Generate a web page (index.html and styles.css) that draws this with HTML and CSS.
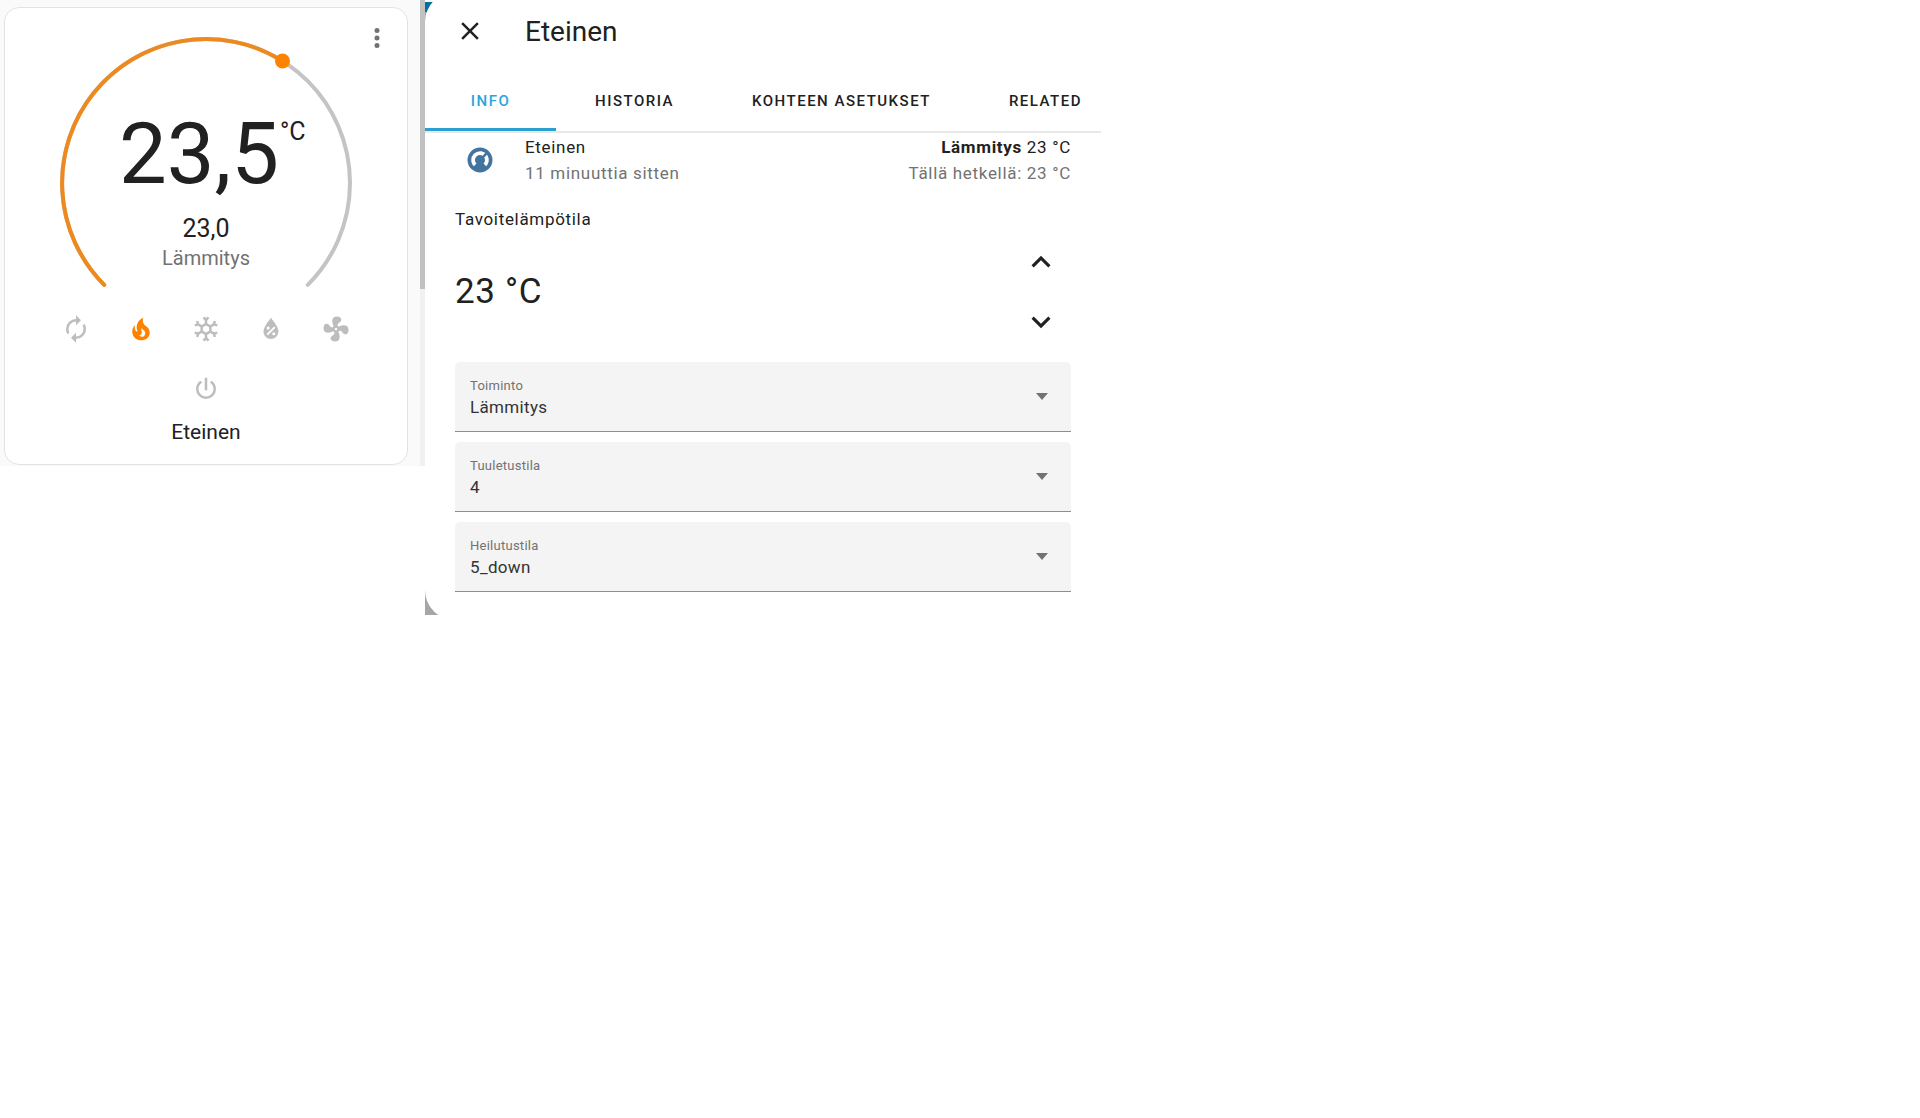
FILE: index.html
```html
<!DOCTYPE html>
<html lang="fi">

<head>
    <meta charset="UTF-8">
    <meta name="viewport" content="width=device-width, initial-scale=1.0">
    <title>Eteinen</title>
    <link rel="stylesheet" href="styles.css">
</head>

<body>
    <main class="screen">
        <!-- Thermostat card -->
        <section class="dashboard">
            <div class="card">
                <button class="icon-btn more" aria-label="Lisää">
                    <svg class="icon" viewBox="0 0 24 24"><path d="M12,16A2,2 0 0,1 14,18A2,2 0 0,1 12,20A2,2 0 0,1 10,18A2,2 0 0,1 12,16M12,10A2,2 0 0,1 14,12A2,2 0 0,1 12,14A2,2 0 0,1 10,12A2,2 0 0,1 12,10M12,4A2,2 0 0,1 14,6A2,2 0 0,1 12,8A2,2 0 0,1 10,6A2,2 0 0,1 12,4Z"/></svg>
                </button>

                <svg class="dial" viewBox="0 0 300 256">
                    <path class="track" d="M48.2,251.8 A144,144 0 1 1 251.8,251.8"/>
                    <path class="value" d="M48.2,251.8 A144,144 0 0 1 226.5,28"/>
                    <circle class="handle" cx="226.5" cy="28" r="7.5"/>
                    <text class="current" x="143" y="150">23,5</text>
                    <text class="unit" x="224" y="107">°C</text>
                    <text class="target" x="150" y="204">23,0</text>
                    <text class="action" x="150" y="232">Lämmitys</text>
                </svg>

                <div class="modes">
                    <button class="icon-btn" aria-label="Automaatti">
                        <svg class="icon" viewBox="0 0 24 24"><path d="M12,6V9L16,5L12,1V4A8,8 0 0,0 4,12C4,13.57 4.46,15.03 5.24,16.26L6.7,14.8C6.25,13.97 6,13 6,12A6,6 0 0,1 12,6M18.76,7.74L17.3,9.2C17.74,10.04 18,11 18,12A6,6 0 0,1 12,18V15L8,19L12,23V20A8,8 0 0,0 20,12C20,10.43 19.54,8.97 18.76,7.74Z"/></svg>
                    </button>
                    <button class="icon-btn selected" aria-label="Lämmitys">
                        <svg class="icon" viewBox="0 0 24 24"><path d="M17.66 11.2C17.43 10.9 17.15 10.64 16.89 10.38C16.22 9.78 15.46 9.35 14.82 8.72C13.33 7.26 13 4.85 13.95 3C13 3.23 12.17 3.75 11.46 4.32C8.87 6.4 7.85 10.07 9.07 13.22C9.11 13.32 9.15 13.42 9.15 13.55C9.15 13.77 9 13.97 8.8 14.05C8.57 14.15 8.33 14.09 8.14 13.93C8.08 13.88 8.04 13.83 8 13.76C6.87 12.33 6.69 10.28 7.45 8.64C5.78 10 4.87 12.3 5 14.47C5.06 14.97 5.12 15.47 5.29 15.97C5.43 16.57 5.7 17.17 6 17.7C7.08 19.43 8.95 20.67 10.96 20.92C13.1 21.19 15.39 20.8 17.03 19.32C18.86 17.66 19.5 15 18.56 12.72L18.43 12.46C18.22 12 17.66 11.2 17.66 11.2M14.5 17.5C14.22 17.74 13.76 18 13.4 18.1C12.28 18.5 11.16 17.94 10.5 17.28C11.69 17 12.4 16.12 12.61 15.23C12.78 14.43 12.46 13.77 12.33 13C12.21 12.26 12.23 11.63 12.5 10.94C12.69 11.32 12.89 11.7 13.13 12C13.9 13 15.11 13.44 15.37 14.8C15.41 14.94 15.43 15.08 15.43 15.23C15.46 16.05 15.1 16.95 14.5 17.5H14.5Z"/></svg>
                    </button>
                    <button class="icon-btn" aria-label="Jäähdytys">
                        <svg class="icon" viewBox="0 0 24 24"><path d="M20.79,13.95L18.46,14.57L16.46,13.44V10.56L18.46,9.43L20.79,10.05L21.31,8.12L19.54,7.65L20,5.88L18.07,5.36L17.45,7.69L15.45,8.82L13,7.38V5.12L14.71,3.41L13.29,2L12,3.29L10.71,2L9.29,3.41L11,5.12V7.38L8.5,8.82L6.5,7.69L5.92,5.36L4,5.88L4.47,7.65L2.7,8.12L3.22,10.05L5.55,9.43L7.55,10.56V13.45L5.55,14.58L3.22,13.96L2.7,15.89L4.47,16.36L4,18.12L5.93,18.64L6.55,16.31L8.55,15.18L11,16.62V18.88L9.29,20.59L10.71,22L12,20.71L13.29,22L14.7,20.59L13,18.88V16.62L15.5,15.17L17.5,16.3L18.12,18.63L20,18.12L19.53,16.35L21.3,15.88L20.79,13.95M9.5,10.56L12,9.11L14.5,10.56V13.44L12,14.89L9.5,13.44V10.56Z"/></svg>
                    </button>
                    <button class="icon-btn" aria-label="Kuivaus">
                        <svg class="icon" viewBox="0 0 24 24"><path d="M12,3.25C12,3.25 6,10 6,14C6,17.32 8.69,20 12,20A6,6 0 0,0 18,14C18,10 12,3.25 12,3.25M14.47,9.97L15.53,11.03L9.53,17.03L8.47,15.97M9.75,10A1.25,1.25 0 0,1 11,11.25A1.25,1.25 0 0,1 9.75,12.5A1.25,1.25 0 0,1 8.5,11.25A1.25,1.25 0 0,1 9.75,10M14.25,14.5A1.25,1.25 0 0,1 15.5,15.75A1.25,1.25 0 0,1 14.25,17A1.25,1.25 0 0,1 13,15.75A1.25,1.25 0 0,1 14.25,14.5Z"/></svg>
                    </button>
                    <button class="icon-btn" aria-label="Tuuletus">
                        <svg class="icon" viewBox="0 0 24 24"><path d="M12,11A1,1 0 0,0 11,12A1,1 0 0,0 12,13A1,1 0 0,0 13,12A1,1 0 0,0 12,11M12.5,2C17,2 17.11,5.57 14.75,6.75C13.76,7.24 13.32,8.29 13.13,9.22C13.61,9.42 14.03,9.73 14.35,10.13C18.05,8.13 22.03,8.92 22.03,12.5C22.03,17 18.46,17.1 17.28,14.73C16.78,13.74 15.72,13.3 14.79,13.11C14.59,13.59 14.28,14 13.88,14.34C15.87,18.03 15.08,22 11.5,22C7,22 6.91,18.42 9.27,17.24C10.25,16.75 10.69,15.71 10.89,14.79C10.4,14.59 9.97,14.27 9.65,13.87C5.96,15.85 2,15.07 2,11.5C2,7 5.56,6.89 6.74,9.26C7.24,10.25 8.29,10.68 9.22,10.87C9.41,10.39 9.73,9.97 10.14,9.65C8.15,5.96 8.94,2 12.5,2Z"/></svg>
                    </button>
                    <button class="icon-btn" aria-label="Pois">
                        <svg class="icon" viewBox="0 0 24 24"><path d="M16.56,5.44L15.11,6.89C16.84,7.94 18,9.83 18,12A6,6 0 0,1 12,18A6,6 0 0,1 6,12C6,9.83 7.16,7.94 8.88,6.88L7.44,5.44C5.36,6.88 4,9.28 4,12A8,8 0 0,0 12,20A8,8 0 0,0 20,12C20,9.28 18.64,6.88 16.56,5.44M13,3H11V13H13"/></svg>
                    </button>
                </div>
                <p class="name">Eteinen</p>
            </div>
            <div class="scrollbar"><div class="thumb"></div></div>
        </section>

        <!-- More info dialog -->
        <section class="backdrop">
            <div class="dialog">
                <header class="title-bar">
                    <button class="icon-btn" aria-label="Sulje">
                        <svg class="icon" viewBox="0 0 24 24"><path d="M19,6.41L17.59,5L12,10.59L6.41,5L5,6.41L10.59,12L5,17.59L6.41,19L12,13.41L17.59,19L19,17.59L13.41,12L19,6.41Z"/></svg>
                    </button>
                    <h1>Eteinen</h1>
                </header>

                <nav class="tabs">
                    <button class="tab active">INFO</button>
                    <button class="tab">HISTORIA</button>
                    <button class="tab">KOHTEEN ASETUKSET</button>
                    <button class="tab">RELATED</button>
                </nav>

                <div class="content">
                    <div class="state">
                        <svg class="icon" viewBox="0 0 24 24"><path d="M16.95,16.95L14.83,14.83C15.55,14.1 16,13.1 16,12C16,11.26 15.79,10.57 15.43,10L17.6,7.81C18.5,9 19,10.43 19,12C19,13.93 18.22,15.68 16.95,16.95M12,5C13.57,5 15,5.5 16.19,6.4L14,8.56C13.43,8.21 12.74,8 12,8A4,4 0 0,0 8,12C8,13.1 8.45,14.1 9.17,14.83L7.05,16.95C5.78,15.68 5,13.93 5,12A7,7 0 0,1 12,5M12,2A10,10 0 0,0 2,12A10,10 0 0,0 12,22A10,10 0 0,0 22,12A10,10 0 0,0 12,2Z"/></svg>
                        <div class="info">
                            <p>Eteinen</p>
                            <p class="secondary">11 minuuttia sitten</p>
                        </div>
                        <div class="reading">
                            <p><b>Lämmitys</b> 23 °C</p>
                            <p class="secondary">Tällä hetkellä: 23 °C</p>
                        </div>
                    </div>

                    <p class="section-label">Tavoitelämpötila</p>
                    <div class="target-control">
                        <span class="temperature">23 °C</span>
                        <div class="steps">
                            <button class="icon-btn" aria-label="Nosta">
                                <svg class="icon" viewBox="0 0 24 24"><path d="M7.41,15.41L12,10.83L16.59,15.41L18,14L12,8L6,14L7.41,15.41Z"/></svg>
                            </button>
                            <button class="icon-btn" aria-label="Laske">
                                <svg class="icon" viewBox="0 0 24 24"><path d="M7.41,8.58L12,13.17L16.59,8.58L18,10L12,16L6,10L7.41,8.58Z"/></svg>
                            </button>
                        </div>
                    </div>

                    <div class="field">
                        <label for="operation">Toiminto</label>
                        <select id="operation">
                            <option>Lämmitys</option>
                        </select>
                    </div>
                    <div class="field">
                        <label for="fan-mode">Tuuletustila</label>
                        <select id="fan-mode">
                            <option>4</option>
                        </select>
                    </div>
                    <div class="field">
                        <label for="swing-mode">Heilutustila</label>
                        <select id="swing-mode">
                            <option>5_down</option>
                        </select>
                    </div>
                </div>
            </div>
        </section>
    </main>
</body>

</html>
```
FILE: styles.css
```css
* {
    margin: 0;
    padding: 0;
    box-sizing: border-box;
}

body {
    font-family: Roboto, "Liberation Sans", sans-serif;
    background-color: #fff;
    color: #212121;
}

button {
    border: none;
    background: none;
    color: inherit;
    font-family: inherit;
    cursor: pointer;
}

.screen {
    display: flex;
    align-items: flex-start;
    max-width: 1101px;
}

.icon {
    display: block;
    width: 30px;
    height: 30px;
    fill: currentColor;
}

.icon-btn {
    display: flex;
    align-items: center;
    justify-content: center;
    width: 60px;
    height: 60px;
}

/* Thermostat card */
.dashboard {
    display: flex;
    flex: 425;
    background-color: #fafafa;
}

.card {
    position: relative;
    flex: 1;
    margin: 7px 12px 1px 4px;
    padding: 25px 0 19px;
    border: 1px solid #e3e3e3;
    border-radius: 15px;
    background-color: #fff;
}

.more {
    position: absolute;
    top: 0;
    right: 0;
    color: #727272;
}

.dial {
    display: block;
    width: 300px;
    margin: 0 auto;
}

.dial path {
    fill: none;
    stroke-width: 4;
    stroke-linecap: round;
}

.track {
    stroke: #c4c4c4;
}

.value {
    stroke: #ee8a1d;
}

.handle {
    fill: #ff8100;
}

.dial text {
    fill: #212121;
    text-anchor: middle;
}

.dial .current {
    font-size: 85px;
}

.dial .unit {
    font-size: 25px;
    text-anchor: start;
}

.dial .target {
    font-size: 25px;
}

.dial .action {
    font-size: 20px;
    fill: #727272;
}

.modes {
    display: flex;
    flex-wrap: wrap;
    justify-content: center;
    column-gap: 5px;
    margin: 10px 30px 0;
    color: #bdbdbd;
}

.modes .selected {
    color: #ff8100;
}

.name {
    font-size: 21px;
    line-height: 26px;
    text-align: center;
}

.scrollbar {
    width: 5px;
    background-color: #f1f1f1;
}

.thumb {
    height: 62%;
    background-color: #c1c1c1;
}

/* More info dialog */
.backdrop {
    flex: 676;
    overflow: hidden;
    background: linear-gradient(#fff 2px, #026fa1 2px, #026fa1 12px, #a6a6a6 12px);
}

.dialog {
    margin: -8px 0 -5px;
    padding: 8px 0 18px;
    border-radius: 30px 0 0 30px;
    background-color: #fff;
}

.title-bar {
    display: flex;
    align-items: center;
    gap: 25px;
    height: 72px;
    padding: 0 15px 10px;
}

.title-bar h1 {
    font-size: 28px;
    font-weight: 400;
}

.tabs {
    display: flex;
    height: 61px;
    overflow: hidden;
    border-bottom: 2px solid #e8e8e8;
}

.tab {
    flex: none;
    min-width: 131px;
    padding: 2px 39px 0;
    border-bottom: 3px solid transparent;
    font-size: 15px;
    font-weight: 500;
    letter-spacing: 0.1em;
}

.tab.active {
    border-color: #2c9fd1;
    color: #2ba5dc;
}

.content {
    padding: 0 30px;
    font-size: 17px;
    line-height: 26px;
    letter-spacing: 0.04em;
}

.state {
    display: flex;
    align-items: center;
    padding: 1px 0 0 10px;
}

.state .icon {
    color: #44739e;
}

.info {
    flex: 1;
    margin-left: 30px;
}

.reading {
    text-align: right;
}

.secondary {
    color: #727272;
}

.section-label {
    margin-top: 20px;
}

.target-control {
    display: flex;
    align-items: center;
    justify-content: space-between;
    margin-bottom: 10px;
}

.temperature {
    font-size: 35px;
}

.steps .icon {
    width: 38px;
    height: 38px;
}

.field {
    position: relative;
    height: 70px;
    margin-bottom: 10px;
    padding-top: 14px;
    border-bottom: 1px solid #8e8e8e;
    border-radius: 5px 5px 0 0;
    background-color: #f4f4f4;
}

.field::after {
    content: "";
    position: absolute;
    top: 31px;
    right: 23px;
    border: 6px solid transparent;
    border-top: 7px solid #727272;
    border-bottom: none;
    pointer-events: none;
}

.field label {
    display: block;
    padding-left: 15px;
    color: #727272;
    font-size: 13px;
    line-height: 20px;
    letter-spacing: 0.02em;
}

.field select {
    display: block;
    width: 100%;
    padding-left: 15px;
    border: none;
    appearance: none;
    background: none;
    color: #333;
    font: inherit;
    letter-spacing: 0.02em;
    line-height: 22px;
}
```
